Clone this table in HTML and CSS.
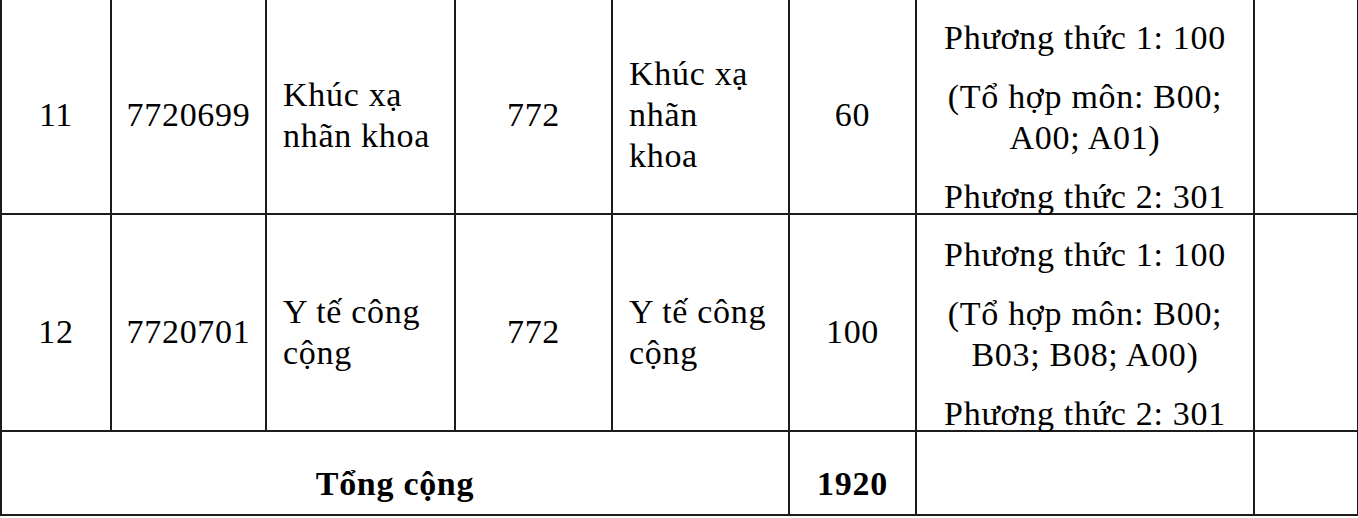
FILE: index.html
```html
<!DOCTYPE html>
<html lang="vi">
<head>
<meta charset="utf-8">
<title>Bảng chỉ tiêu</title>
<link rel="stylesheet" href="styles.css">
</head>
<body>
<table class="quota">
  <colgroup>
    <col class="c-stt">
    <col class="c-code">
    <col class="c-name">
    <col class="c-group">
    <col class="c-gname">
    <col class="c-num">
    <col class="c-method">
    <col class="c-note">
  </colgroup>
  <tbody>
    <tr class="row">
      <td class="center">11</td>
      <td class="center">7720699</td>
      <td class="left">Khúc xạ<br>nhãn khoa</td>
      <td class="center">772</td>
      <td class="left">Khúc xạ<br>nhãn<br>khoa</td>
      <td class="center">60</td>
      <td class="center method">
        <p>Phương thức 1: 100</p>
        <p>(Tổ hợp môn: B00;<br>A00; A01)</p>
        <p>Phương thức 2: 301</p>
      </td>
      <td></td>
    </tr>
    <tr class="row">
      <td class="center">12</td>
      <td class="center">7720701</td>
      <td class="left">Y tế công<br>cộng</td>
      <td class="center">772</td>
      <td class="left">Y tế công<br>cộng</td>
      <td class="center">100</td>
      <td class="center method">
        <p>Phương thức 1: 100</p>
        <p>(Tổ hợp môn: B00;<br>B03; B08; A00)</p>
        <p>Phương thức 2: 301</p>
      </td>
      <td></td>
    </tr>
    <tr class="total">
      <td class="center bold" colspan="5">Tổng cộng</td>
      <td class="center bold">1920</td>
      <td></td>
      <td></td>
    </tr>
  </tbody>
</table>
</body>
</html>
```

FILE: styles.css
```css
html, body {
  margin: 0;
  padding: 0;
  background: #ffffff;
}

body {
  font-family: "Liberation Serif", "Times New Roman", serif;
  font-size: 34px;
  color: #000000;
  overflow: hidden;
}

.quota {
  border-collapse: collapse;
  table-layout: fixed;
  width: 1357px;
  margin-top: -4px;
}

.c-stt { width: 110px; }
.c-code { width: 155px; }
.c-name { width: 189px; }
.c-group { width: 157px; }
.c-gname { width: 177px; }
.c-num { width: 127px; }
.c-method { width: 338px; }
.c-note { width: 104px; }

.quota td {
  border: 2px solid #1c1c1c;
  padding: 18px 0 0 0;
  vertical-align: middle;
  line-height: 41px;
  letter-spacing: 0.7px;
  white-space: nowrap;
}

.row {
  height: 217px;
}

.total {
  height: 84px;
}

.total td {
  padding-top: 20px;
}

.center {
  text-align: center;
}

.left {
  text-align: left;
  padding-left: 16px !important;
}

.bold {
  font-weight: bold;
}

.method p {
  margin: 0;
}

.method p + p {
  margin-top: 18px;
}

.method p:last-child {
  margin-bottom: -5px;
}
```
